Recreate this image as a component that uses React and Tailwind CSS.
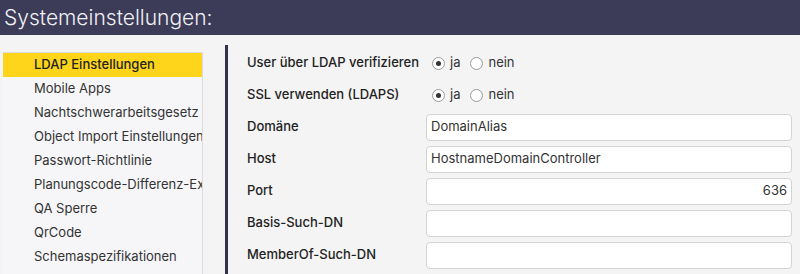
import React from 'react';

const menuItems = [
  'LDAP Einstellungen',
  'Mobile Apps',
  'Nachtschwerarbeitsgesetz',
  'Object Import Einstellungen',
  'Passwort-Richtlinie',
  'Planungscode-Differenz-Export',
  'QA Sperre',
  'QrCode',
  'Schemaspezifikationen',
  'Schnittstellen',
];

const Radio = ({ checked, label }) => (
  <label className="flex items-center gap-[5px]">
    <span className="w-[13px] h-[13px] rounded-full border border-[#9a9a9a] bg-white flex items-center justify-center">
      {checked && <span className="w-[5px] h-[5px] rounded-full bg-[#333]" />}
    </span>
    <span>{label}</span>
  </label>
);

const RadioRow = ({ label }) => (
  <div className="flex items-center h-[32px]">
    <div className="w-[179px] font-medium">{label}</div>
    <div className="flex items-center gap-[10px] pl-[6px] text-[#333]">
      <Radio checked label="ja" />
      <Radio label="nein" />
    </div>
  </div>
);

const InputRow = ({ label, value = '', right = false }) => (
  <div className="flex items-center h-[32px]">
    <div className="w-[179px] font-medium">{label}</div>
    <div
      className={`w-[366px] h-[27px] rounded-[4px] border border-[#d4d4d4] bg-white flex items-center px-[4px] text-[#333] ${
        right ? 'justify-end' : ''
      }`}
    >
      {value}
    </div>
  </div>
);

const App = () => {
  return (
    <div
      className="w-[800px] h-[274px] overflow-hidden bg-[#f4f4f5] text-[13px] text-[#222]"
      style={{ fontFamily: 'Inter, "Noto Sans", sans-serif' }}
    >
      <div className="h-[35px] bg-[#3c3b58] text-[#f2f2f6] text-[21px] font-light pl-[4px] flex items-center">
        Systemeinstellungen:
      </div>

      <div className="flex pt-[16px]">
        <div className="ml-[3px] w-[200px] mt-[1px] border-t border-r border-[#dcdce0] bg-[#f6f6f8] overflow-hidden">
          {menuItems.map((item, i) => (
            <div
              key={item}
              className={`h-[24px] pl-[31px] flex items-center whitespace-nowrap ${
                i === 0 ? 'bg-[#fed51b] text-[#222] font-medium' : 'text-[#333]'
              }`}
            >
              {item}
            </div>
          ))}
        </div>

        <div className="ml-[22px] w-[3px] bg-[#34334d] h-[240px] -mt-[6px]" />

        <div className="pl-[19px] -mt-[4px]">
          <RadioRow label="User über LDAP verifizieren" />
          <RadioRow label="SSL verwenden (LDAPS)" />
          <InputRow label="Domäne" value="DomainAlias" />
          <InputRow label="Host" value="HostnameDomainController" />
          <InputRow label="Port" value="636" right />
          <InputRow label="Basis-Such-DN" />
          <InputRow label="MemberOf-Such-DN" />
        </div>
      </div>
    </div>
  );
};

export default App;
